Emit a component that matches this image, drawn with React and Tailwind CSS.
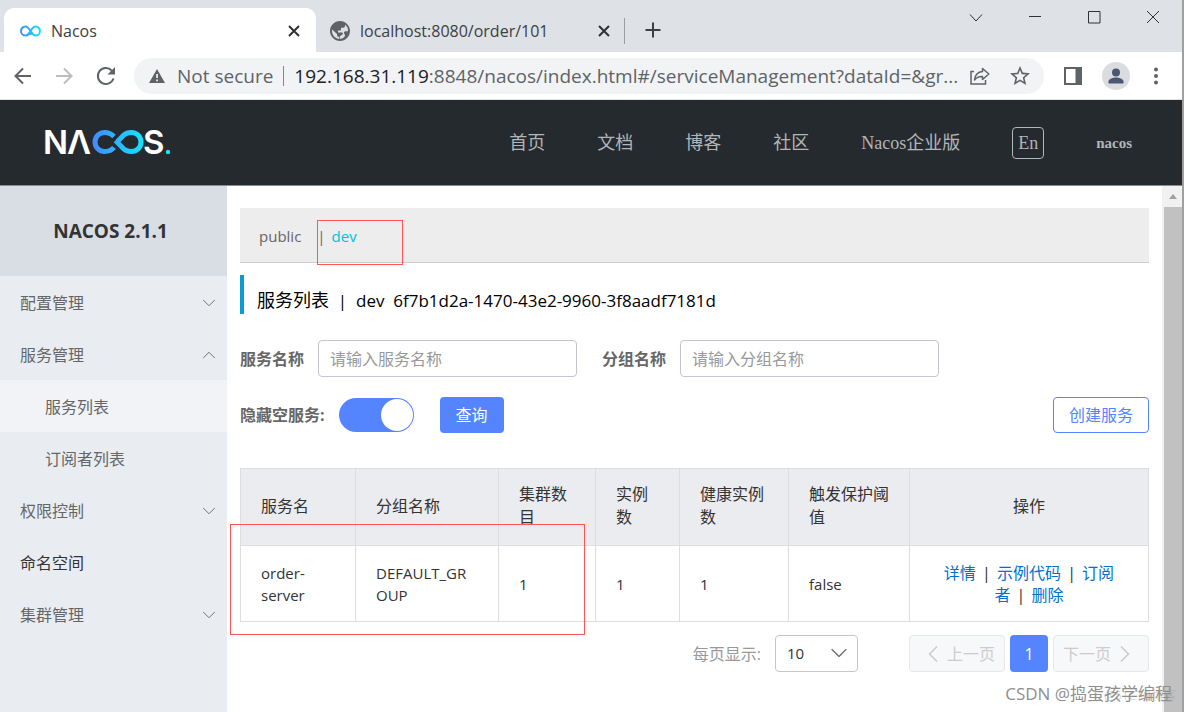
import { useState } from "react";
import { ChevronDown, ChevronLeft, ChevronRight, ChevronUp } from "lucide-react";

const NAV = ["首页", "文档", "博客", "社区", "Nacos企业版"];

const MENU = [
  { label: "配置管理", arrow: "down" },
  { label: "服务管理", arrow: "up" },
  { label: "服务列表", child: true, active: true },
  { label: "订阅者列表", child: true },
  { label: "权限控制", arrow: "down" },
  { label: "命名空间", dark: true },
  { label: "集群管理", arrow: "down" },
];

const COLUMNS = [
  { title: "服务名", width: "w-[115px]" },
  { title: "分组名称", width: "w-[143px]" },
  { title: "集群数目", width: "w-[97px]" },
  { title: "实例数", width: "w-[84px]" },
  { title: "健康实例数", width: "w-[109px]" },
  { title: "触发保护阈值", width: "w-[121px]" },
];

const SERVICES = [
  {
    name: "order-server",
    group: "DEFAULT_GROUP",
    clusters: 1,
    instances: 1,
    healthy: 1,
    threshold: "false",
  },
];

export default function App() {
  return (
    <div className="flex min-h-screen flex-col border-r-2 border-[#a0a0a0] bg-white font-['Open_Sans','Noto_Sans_CJK_SC',sans-serif] text-[#333]">
      <TabStrip />
      <Toolbar />
      <Header />
      <div className="flex flex-1">
        <Sidebar />
        <ServiceList />
        <Scrollbar />
      </div>
    </div>
  );
}

function TabStrip() {
  return (
    <div className="flex h-13 bg-[#dee1e6] text-[#3c4043]">
      <div className="ml-1 mt-2 flex w-[312px] items-center rounded-t-[10px] bg-white pl-4 pr-3 pt-0.5">
        <svg width="21" height="12" viewBox="0 0 21 12" fill="none">
          <GradientStroke
            id="fav"
            d="M13 8.6L8.6 9.3C7.8 10.2 6.8 10.6 5.6 10.6A4.6 4.6 0 0 1 5.6 1.4C9.8 1.4 11.2 10.6 15.4 10.6A4.6 4.6 0 0 0 15.4 1.4C11.2 1.4 9.8 10.6 5.6 10.6"
            width={2}
            end={21}
          />
        </svg>
        <span className="ml-2.5 flex-1 text-base leading-6">Nacos</span>
        <CloseButton label="Close Nacos" />
      </div>
      <div className="flex w-[308px] items-center pl-3.5 pr-2.5 pt-2.5">
        <svg width="20" height="20" viewBox="2 2 20 20" fill="#5f6368">
          <path d="M12 2C6.48 2 2 6.48 2 12s4.48 10 10 10 10-4.48 10-10S17.52 2 12 2zM4 12c0-.5.05-1 .13-1.4L9 15v1c0 1.1.9 2 2 2v1.9C7 19.4 4 16 4 12zm7.7 8v-2.5l3-2.3c.3-.3.3-1.2-.2-1.7H10v-2h2c.55 0 1-.45 1-1V8.7h2.2c1.1 0 1.8-.9 1.8-2v-.9c2.3 1.1 3.200 4 3 6.4h-2.5c-1 0-1.5.8-1.5 1.8 0 1.3 1 1.3 1 2.3 0 1.7-2.5 3.6-5.3 3.7z" />
        </svg>
        <span className="ml-2.5 flex-1 text-base leading-6">
          localhost:8080/order/101
        </span>
        <CloseButton label="Close localhost" />
      </div>
      <div className="mt-[18px] h-[26px] w-px bg-[#9a9da1]" />
      <button aria-label="New tab" className="mt-2 w-14 pl-5">
        <svg width="16" height="16" viewBox="0 0 16 16" stroke="#3c4043" strokeWidth="2">
          <path d="M8 0.5v15M0.5 8h15" />
        </svg>
      </button>
      <div className="ml-auto flex h-[34px] pr-[22px]">
        <WindowButton label="Search tabs" d="M1 4.5L7 11L13 4.5" />
        <WindowButton label="Minimize" d="M1 6.5h12" />
        <WindowButton label="Maximize" d="M1.5 1.5h11.5v11.5h-11.5z" />
        <WindowButton label="Close" d="M1 1L13 13M13 1L1 13" last />
      </div>
    </div>
  );
}

function CloseButton({ label }) {
  return (
    <button aria-label={label} className="p-1">
      <svg width="12" height="12" viewBox="0 0 12 12" stroke="#303134" strokeWidth="2">
        <path d="M1 1L11 11M11 1L1 11" />
      </svg>
    </button>
  );
}

function WindowButton({ label, d, last }) {
  return (
    <button aria-label={label} className={last ? "" : "mr-[45px]"}>
      <svg width="14" height="14" viewBox="0 0 14 14" fill="none" stroke="#303134">
        <path d={d} />
      </svg>
    </button>
  );
}

function Toolbar() {
  return (
    <div className="flex h-12 items-center border-b border-[#e2e3e5] bg-white pl-3.5 pr-5">
      <button aria-label="Back" className="mr-[23px]">
        <svg width="18" height="18" viewBox="0 0 18 18" fill="none" stroke="#5f6368" strokeWidth="2">
          <path d="M17 9H2M9 1.5L1.5 9L9 16.5" />
        </svg>
      </button>
      <button aria-label="Forward" className="mr-[23px]">
        <svg width="18" height="18" viewBox="0 0 18 18" fill="none" stroke="#babcbe" strokeWidth="2">
          <path d="M1 9h15M9 1.5L16.5 9L9 16.5" />
        </svg>
      </button>
      <button aria-label="Reload" className="mr-[18px]">
        <svg width="20" height="20" viewBox="0 0 20 20" fill="none" stroke="#5f6368" strokeWidth="2">
          <path d="M17.5 12.5A8 8 0 1 1 15.7 4.5" />
          <path d="M19 1v7.5h-7.5z" fill="#5f6368" stroke="none" />
        </svg>
      </button>

      <div className="flex h-9 min-w-0 flex-1 items-center rounded-full bg-[#f1f3f4] pl-[15px] pr-3.5 text-[19px] leading-6 text-[#5f6368]">
        <svg width="16" height="14" viewBox="0 0 16 14">
          <path d="M8 0L16 14H0z" fill="#5f6368" />
          <path d="M7.2 5h1.7v4h-1.7zM7.2 10.5h1.7v1.7h-1.7z" fill="#f1f3f4" />
        </svg>
        <span className="ml-3 whitespace-nowrap">Not secure</span>
        <span className="mx-2.5 h-5 w-px shrink-0 bg-[#80868b]" />
        <span className="min-w-0 flex-1 whitespace-nowrap">
          <span className="text-[#202124]">192.168.31.119</span>
          :8848/nacos/index.html#/serviceManagement?dataId=&amp;gr...
        </span>
        <button aria-label="Share" className="ml-3">
          <svg width="20" height="18" viewBox="0 0 20 18" fill="none" stroke="#5f6368" strokeWidth="1.5">
            <path d="M4 4.5H1V17h14.5v-4" />
            <path d="M12.5 1.5L18.8 7L12.5 12.5V9.5C9 9.3 6.5 10.5 4.5 13C5 8.5 7.5 5 12.5 4.5z" strokeLinejoin="round" />
          </svg>
        </button>
        <button aria-label="Bookmark" className="ml-5">
          <svg width="20" height="20" viewBox="2 2 20 20" fill="#5f6368">
            <path d="M22 9.24l-7.19-.62L12 2 9.19 8.63 2 9.24l5.46 4.73L5.82 21 12 17.27 18.18 21l-1.63-7.03L22 9.24zM12 15.4l-3.76 2.27 1-4.28-3.32-2.88 4.38-.38L12 6.1l1.71 4.04 4.38.38-3.32 2.88 1 4.28L12 15.4z" />
          </svg>
        </button>
      </div>

      <button aria-label="Side panel" className="ml-5">
        <svg width="18" height="18" viewBox="0 0 18 18">
          <path d="M1 1h16v16H1z" fill="none" stroke="#5f6368" strokeWidth="2" />
          <path d="M11.5 1H17v16h-5.5z" fill="#5f6368" />
        </svg>
      </button>
      <button aria-label="Profile" className="ml-5 rounded-full bg-[#dadce0]">
        <svg width="28" height="28" viewBox="0 0 28 28" fill="#4b5670">
          <circle cx="14" cy="10.500" r="4" />
          <path d="M6.5 21.5v-2c0-2.6 5-4 7.5-4s7.5 1.4 7.5 4v2z" />
        </svg>
      </button>
      <button aria-label="Menu" className="ml-5 px-1">
        <svg width="4" height="18" viewBox="0 0 4 18" fill="#5f6368">
          <circle cx="2" cy="2.500" r="2" />
          <circle cx="2" cy="9" r="2" />
          <circle cx="2" cy="15.500" r="2" />
        </svg>
      </button>
    </div>
  );
}

// Stroke that runs blue to cyan, shared by the logo and the tab icon
function GradientStroke({ id, d, width, start = 0, end }) {
  return (
    <>
      <defs>
        <linearGradient id={id} gradientUnits="userSpaceOnUse" x1={start} y1="0" x2={end} y2="0">
          <stop offset="0" stopColor="#4488ff" />
          <stop offset="1" stopColor="#12e6fb" />
        </linearGradient>
      </defs>
      <path d={d} stroke={`url(#${id})`} strokeWidth={width} fill="none" />
    </>
  );
}

function Logo() {
  return (
    <svg
      width="130"
      height="44"
      viewBox="-2 -6 130 44"
      className="font-['Inter','Liberation_Sans',sans-serif] text-[33px] font-semibold"
      fill="white"
    >
      <text x="-2" y="27">N</text>
      <text x="22" y="27">Λ</text>
      <text x="98" y="27">S</text>
      <GradientStroke
        id="logo"
        start={47}
        end={99}
        width={5}
        d="M69 20.5C66.5 23.5 63.5 24.5 59.5 24.5A9.5 9.5 0 0 1 59.5 5.5C63.5 5.5 66 6.5 69 9.5M72 15L79 7.8C81 6 83.5 5.5 86.5 5.5A9.5 9.5 0 0 1 86.5 24.5C83.5 24.5 81 24 79 22.2L70.500 13.500"
      />
      <circle cx="123" cy="25" r="2.200" fill="#12e6fb" />
    </svg>
  );
}

function Header() {
  return (
    <header className="flex h-[86px] items-center border-b border-[#8a8d90] bg-[#252a2f] pl-[43px] pr-[50px] font-['Liberation_Serif','Noto_Sans_CJK_SC',serif] text-lg leading-6 text-[#b3b5b7]">
      <a href="#/" aria-label="NACOS">
        <Logo />
      </a>
      <nav className="ml-auto flex items-center gap-[52px]">
        {NAV.map((item) => (
          <a key={item} href="#/">
            {item}
          </a>
        ))}
        <button className="h-8 rounded-sm border border-[#b3b5b7] px-[5px]">En</button>
        <a href="#/user" className="text-[15px] font-bold">
          nacos
        </a>
      </nav>
    </header>
  );
}

function Sidebar() {
  return (
    <aside className="w-[227px] shrink-0 bg-[#e9edf2]">
      <h1 className="flex h-[90px] items-center justify-center bg-[#d9dde4] pr-1.5 text-[19px] font-bold">
        NACOS 2.1.1
      </h1>
      <ul>
        {MENU.map((item) => (
          <li key={item.label}>
            <a
              href="#/"
              className={`flex h-13 items-center justify-between pr-[7px] pt-0.5 text-base leading-6 ${
                item.child ? "pl-[45px]" : "pl-5"
              } ${item.active ? "bg-[#f2f3f7]" : ""} ${
                item.dark ? "text-[#333]" : "text-[#666]"
              }`}
            >
              {item.label}
              {item.arrow === "down" && <ChevronDown size={22} strokeWidth={1} />}
              {item.arrow === "up" && <ChevronUp size={22} strokeWidth={1} />}
            </a>
          </li>
        ))}
      </ul>
    </aside>
  );
}

function ServiceList() {
  const [hideEmpty, setHideEmpty] = useState(true);

  return (
    <main className="relative min-w-0 flex-1 px-[13px] pt-[22px]">
      <div className="relative flex h-[55px] items-center border-b border-[#ccc] bg-[#ededed] pl-[19px] pt-0.5 text-[15px] text-[#666]">
        <a href="#/public">public</a>
        <span className="ml-4">|</span>
        <a href="#/dev" className="ml-1.5 text-[#00c1de]">
          dev
        </a>
        <div className="absolute left-[77px] top-3 h-[45px] w-[86px] border border-[#f55]" />
      </div>

      <h2 className="mt-3 h-[39px] whitespace-pre border-l-4 border-[#0b9bd0] pl-[13px] pt-[11px] text-[17px] leading-7 text-black">
        <span className="text-lg leading-7">服务列表</span>
        {"  |  dev  6f7b1d2a-1470-43e2-9960-3f8aadf7181d"}
      </h2>

      <div className="mt-[26px] flex items-center gap-[25px]">
        <SearchField id="service" label="服务名称" placeholder="请输入服务名称" />
        <SearchField id="group" label="分组名称" placeholder="请输入分组名称" />
      </div>

      <div className="mt-5 flex items-center">
        <label htmlFor="hide" className="font-bold text-[#666]">
          隐藏空服务:
        </label>
        <input
          id="hide"
          type="checkbox"
          role="switch"
          checked={hideEmpty}
          onChange={(e) => setHideEmpty(e.target.checked)}
          className="ml-3.5 h-[34px] w-[75px] appearance-none rounded-full bg-gray-300 p-px before:block before:size-8 before:rounded-full before:bg-white checked:bg-[#5584ff] checked:before:ml-auto"
        />
        <button className="ml-[26px] h-9 rounded-[4px] bg-[#5584ff] px-4 text-base text-white">
          查询
        </button>
        <button className="ml-auto h-9 rounded-[4px] border border-[#5584ff] px-[15px] text-base text-[#5584ff]">
          创建服务
        </button>
      </div>

      <div className="relative mt-[35px]">
        <ServiceTable />
        <div className="absolute -left-2.5 top-14 h-[111px] w-[355px] border border-[#f55]" />
      </div>

      <Pagination />

      <div className="absolute -right-2.5 bottom-1.5 whitespace-nowrap text-[17px] leading-6">
        <span className="text-[#8f8f8f]">CSDN @捣蛋孩学编程</span>
        <span className="absolute -right-1 top-0.5 text-xs leading-6 text-[#999]/40">
          @51CTO博客
        </span>
      </div>
    </main>
  );
}

function SearchField({ id, label, placeholder }) {
  return (
    <div className="flex items-center gap-[14px]">
      <label htmlFor={id} className="font-bold text-[#666]">
        {label}
      </label>
      <input
        id={id}
        placeholder={placeholder}
        className="h-[37px] w-[259px] rounded-[4px] border border-[#c4c6cf] px-[11px] text-base placeholder:text-[#999]"
      />
    </div>
  );
}

function ServiceTable() {
  const cell = "border border-[#dcdee3] pl-5";

  return (
    <table className="w-full table-fixed border-collapse text-left">
      <thead>
        <tr className="h-[77px] bg-[#ebecf0] text-base leading-[23px]">
          {COLUMNS.map((col) => (
            <th key={col.title} className={`${cell} ${col.width} pb-0.5 pr-4 font-normal`}>
              {col.title}
            </th>
          ))}
          <th className="border border-[#dcdee3] pb-0.5 text-center font-normal">操作</th>
        </tr>
      </thead>
      <tbody>
        {SERVICES.map((s) => (
          <tr key={s.name} className="h-19 text-[15px] leading-[22px]">
            <td className={`${cell} pr-5`}>{s.name}</td>
            <td className={`${cell} break-all pr-6`}>{s.group}</td>
            <td className={cell}>{s.clusters}</td>
            <td className={cell}>{s.instances}</td>
            <td className={cell}>{s.healthy}</td>
            <td className={cell}>{s.threshold}</td>
            <td className="border border-[#dcdee3] px-8 text-center text-base leading-[22px]">
              <Action label="详情" />
              <Separator />
              <Action label="示例代码" />
              <Separator />
              <Action label="订阅者" />
              <Separator />
              <Action label="删除" />
            </td>
          </tr>
        ))}
      </tbody>
    </table>
  );
}

function Action({ label }) {
  return (
    <a href="#/" className="text-[#0070cc]">
      {label}
    </a>
  );
}

function Separator() {
  return <span className="mx-0.5"> | </span>;
}

function Pagination() {
  const disabled =
    "flex h-[37px] w-24 items-center justify-center rounded-[4px] border border-[#e6e7eb] bg-[#f7f8fa] text-base text-[#ccc]";

  return (
    <div className="mt-[13px] flex items-center justify-end pb-10">
      <label htmlFor="size" className="text-[#999]">
        每页显示:
      </label>
      <div className="relative ml-3.5">
        <select
          id="size"
          defaultValue="10"
          className="h-[37px] w-[83px] appearance-none rounded-[4px] border border-[#c4c6cf] bg-white pl-[11px] text-[15px]"
        >
          <option>10</option>
          <option>20</option>
          <option>50</option>
        </select>
        <ChevronDown
          size={28}
          strokeWidth={1}
          className="pointer-events-none absolute right-[5px] top-1 text-[#666]"
        />
      </div>
      <div className="ml-[51px] flex gap-[5px]">
        <button disabled className={disabled}>
          <ChevronLeft size={28} strokeWidth={1.5} />
          上一页
        </button>
        <button className="h-[37px] w-[38px] rounded-[4px] bg-[#5584ff] text-base text-white">1</button>
        <button disabled className={disabled}>
          下一页
          <ChevronRight size={28} strokeWidth={1.5} />
        </button>
      </div>
    </div>
  );
}

function Scrollbar() {
  return (
    <div className="flex w-5 flex-col bg-[#f1f1f1] pl-0.5">
      <div className="flex h-[21px] items-center justify-center">
        <svg width="8" height="5" viewBox="0 0 8 5">
          <path d="M4 0L8 5H0z" fill="#a0a0a0" />
        </svg>
      </div>
      <div className="flex-1 bg-[#c1c1c1]" />
    </div>
  );
}
